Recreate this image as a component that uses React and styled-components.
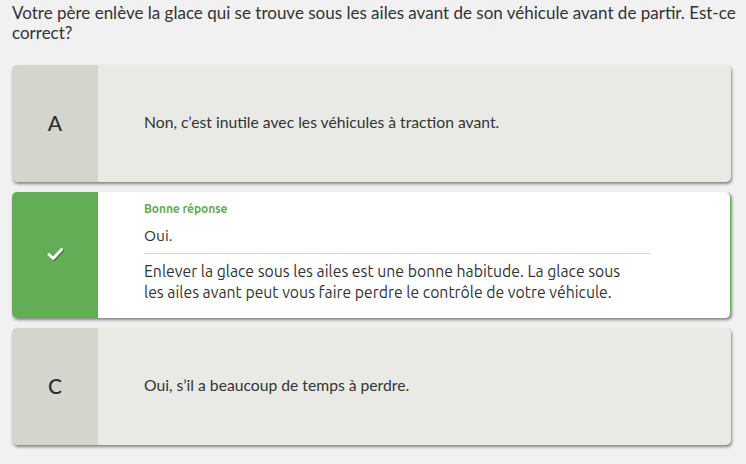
import styled, { createGlobalStyle } from "styled-components";

const GlobalStyle = createGlobalStyle`
  html, body {
    margin: 0;
    padding: 0;
    background: #f1f1f1;
  }
`;

const answers = [
  { letter: "A", text: "Non, c’est inutile avec les véhicules à traction avant." },
  {
    correct: true,
    text: "Oui.",
    explanation:
      "Enlever la glace sous les ailes est une bonne habitude. La glace sous les ailes avant peut vous faire perdre le contrôle de votre véhicule.",
  },
  { letter: "C", text: "Oui, s’il a beaucoup de temps à perdre." },
];

const Check = () => (
  <svg width="17" height="14" viewBox="0 0 17 14">
    <path
      d="M2 7.5 L6.2 11.5 L14.5 2.5"
      fill="none"
      stroke="#fff"
      strokeWidth="2.9"
      strokeLinecap="round"
      strokeLinejoin="round"
      style={{ filter: "drop-shadow(1px 1px 0.5px rgba(0,0,0,0.35))" }}
    />
  </svg>
);

const App = () => (
  <Page>
    <GlobalStyle />
    <Question>
      Votre père enlève la glace qui se trouve sous les ailes avant de son
      véhicule avant de partir. Est-ce correct?
    </Question>
    <List>
      {answers.map((a, i) => (
        <Card key={i} correct={a.correct}>
          <Badge correct={a.correct}>{a.correct ? <Check /> : a.letter}</Badge>
          <Body correct={a.correct}>
            {a.correct ? (
              <>
                <Label>Bonne réponse</Label>
                <Answer correct>{a.text}</Answer>
                <Explanation>{a.explanation}</Explanation>
              </>
            ) : (
              <Answer>{a.text}</Answer>
            )}
          </Body>
        </Card>
      ))}
    </List>
  </Page>
);

const Page = styled.div`
  padding: 3px 8px 18px 12px;
  font-family: Lato, "Liberation Sans", sans-serif;
  color: #333;
`;

const Question = styled.p`
  margin: 0;
  font-size: 17px;
  line-height: 20px;
  color: #333;
`;

const List = styled.div`
  margin-top: 22px;
  margin-right: 7px;
  display: flex;
  flex-direction: column;
  gap: 10px;
`;

const Card = styled.div`
  display: flex;
  min-height: 117px;
  border-radius: 5px;
  overflow: hidden;
  box-shadow: 1px 2px 3px rgba(0, 0, 0, 0.45);
  background: ${(p) => (p.correct ? "#fff" : "#e9eae6")};
  ${(p) => (p.correct ? "min-height: 126px; border-right: 1px solid #63ad56;" : "")}
`;

const Badge = styled.div`
  flex: 0 0 86px;
  display: flex;
  align-items: center;
  justify-content: center;
  background: ${(p) => (p.correct ? "#63ad56" : "#d4d6cd")};
  color: #2e2e2e;
  font-size: 21px;
  font-weight: 500;
  padding-bottom: 3px;
`;

const Body = styled.div`
  flex: 1;
  padding: ${(p) => (p.correct ? "10px 0 14px 46px" : "0 0 0 46px")};
  display: flex;
  flex-direction: column;
  justify-content: ${(p) => (p.correct ? "flex-start" : "center")};
  max-width: 506px;
`;

const Label = styled.div`
  font-family: Ubuntu, "Open Sans", sans-serif;
  font-size: 12px;
  font-weight: 700;
  color: #63ad56;
  line-height: 14px;
  letter-spacing: -0.1px;
`;

const Answer = styled.div`
  font-size: 15.7px;
  line-height: 20px;
  color: #333;
  padding-bottom: 3px;
  ${(p) =>
    p.correct
      ? `font-family: Ubuntu, "Open Sans", sans-serif; font-size: 15.5px; margin-top: 10px; padding-bottom: 7px; border-bottom: 1px solid #d4d6cd;`
      : ""}
`;

const Explanation = styled.p`
  margin: 7px 0 0;
  padding-right: 12px;
  font-family: Ubuntu, "Open Sans", sans-serif;
  font-size: 15.8px;
  line-height: 21px;
  color: #333;
`;

export default App;
